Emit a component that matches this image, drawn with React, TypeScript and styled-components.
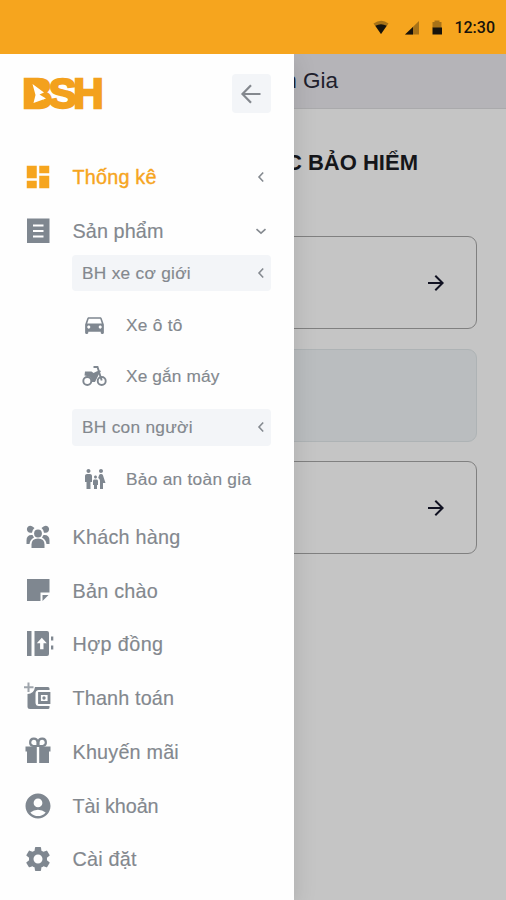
import React from "react";
import styled, { createGlobalStyle } from "styled-components";
import { MdDashboard, MdDirectionsCar, MdFamilyRestroom, MdAccountCircle, MdSettings, MdArrowForward } from "react-icons/md";

const ORANGE = "#f6a51e";
const GREY = "#7f8790";
const TEXT_GREY = "#83888e";

const Global = createGlobalStyle`
  * { box-sizing: border-box; }
  body { margin: 0; font-family: "Liberation Sans", Arial, sans-serif; }
`;

const Screen = styled.div`
  position: relative;
  display: flex;
  flex-direction: column;
  width: 506px;
  height: 900px;
  overflow: hidden;
  background: #c5c5c5;
`;

const StatusBar = styled.header`
  display: flex;
  flex: none;
  align-items: center;
  justify-content: flex-end;
  height: 54px;
  padding-right: 11px;
  background: ${ORANGE};
  color: #17130c;
`;

const StatusIcons = styled.svg`
  width: 72px;
  height: 20px;
  margin: 2px 9px 0 0;
`;

const Clock = styled.span`
  margin-top: 1px;
  font: 500 16px/20px Roboto, sans-serif;
`;

const TitleBar = styled.div`
  display: flex;
  flex: none;
  align-items: center;
  justify-content: flex-end;
  height: 55px;
  padding-right: 168px;
  background: #b5b4b8;
  border-bottom: 1px solid #aaaaac;
  color: #20202c;
  font-size: 22.5px;
  white-space: nowrap;
`;

const Heading = styled.h1`
  margin: 39px 88px 0 0;
  height: 30px;
  color: #15161a;
  font-size: 22px;
  line-height: 30px;
  text-align: right;
  white-space: nowrap;
`;

const Cards = styled.div`
  display: flex;
  flex-direction: column;
  gap: 19.5px;
  padding: 58px 29px 0;
`;

const Card = styled.div<{ $muted?: boolean }>`
  display: flex;
  align-items: center;
  justify-content: flex-end;
  height: 93px;
  padding-right: 28px;
  border: 1px solid ${(p) => (p.$muted ? "#aeb3b5" : "#808080")};
  border-radius: 9px;
  background: ${(p) => (p.$muted ? "#babdbf" : "transparent")};
  color: #111222;
`;

const Drawer = styled.aside`
  position: absolute;
  top: 54px;
  left: 0;
  bottom: 0;
  display: flex;
  flex-direction: column;
  width: 294px;
  background: #fefefe;
  box-shadow: 0 6px 22px rgba(0, 0, 0, 0.13);
  clip-path: inset(0 -40px 0 0);
`;

const DrawerTop = styled.div`
  display: flex;
  align-items: center;
  justify-content: space-between;
  height: 96.5px;
  padding: 0 23px 17.5px 23px;
`;

const BackButton = styled.button`
  display: grid;
  place-items: center;
  width: 39px;
  height: 39px;
  padding: 0 2px 0 0;
  border: 0;
  border-radius: 4px;
  background: #f3f5f8;
`;

const Row = styled.div<{ $active?: boolean }>`
  display: grid;
  flex: none;
  grid-template-columns: 32px 1fr 20px;
  column-gap: 18.5px;
  align-items: center;
  height: 53.75px;
  padding: 0 23px 0 22px;
  color: ${(p) => (p.$active ? ORANGE : GREY)};
`;

const Glyph = styled.svg`
  display: block;
  width: 32px;
  height: 32px;
`;

const Cell = styled.span`
  display: grid;
  place-items: center;
`;

const Label = styled.span<{ $active?: boolean; $spacing?: number }>`
  padding-top: 1px;
  color: ${(p) => (p.$active ? ORANGE : TEXT_GREY)};
  font-size: 19.8px;
  letter-spacing: ${(p) => p.$spacing ?? 0.2}px;
  white-space: nowrap;
  -webkit-text-stroke: ${(p) => (p.$active ? 0.4 : 0.15)}px currentColor;
`;

const SubList = styled.div`
  display: flex;
  flex-direction: column;
  gap: 15px;
  margin: -3px 23px 13px 72px;
`;

const Group = styled.div`
  display: flex;
  align-items: center;
  justify-content: space-between;
  height: 36.4px;
  padding-left: 10px;
  border-radius: 4px;
  background: #f3f5f8;
  color: ${GREY};
`;

const SubItem = styled.div`
  display: grid;
  grid-template-columns: 25px 1fr;
  column-gap: 19px;
  align-items: center;
  height: 36.4px;
  padding-left: 10px;
  color: ${GREY};
`;

const SubLabel = styled.span<{ $spacing?: number }>`
  padding-top: 1px;
  color: ${TEXT_GREY};
  font-size: 17.3px;
  letter-spacing: ${(p) => p.$spacing ?? 0.28}px;
  white-space: nowrap;
  -webkit-text-stroke: 0.15px currentColor;
`;

const Chevron = ({ down }: { down?: boolean }) => (
  <svg width="20" height="20" viewBox="0 0 20 20" fill="none" stroke="#858a90" strokeWidth="1.6">
    <path d={down ? "M5.5 8.2 10 12.2 14.5 8.2" : "M12.2 5.5 8 10 12.2 14.5"} />
  </svg>
);

const Logo = () => (
  <svg width="82" height="36" viewBox="0 0 82 36" overflow="visible">
    <text
      x="-0.8"
      y="32"
      fill="#f3a11d"
      stroke="#f3a11d"
      strokeWidth="2.4"
      fontFamily="Liberation Sans, Arial, sans-serif"
      fontWeight="700"
      fontSize="42"
      letterSpacing="-3.7"
    >
      BSH
    </text>
    <path d="M6 6h14v22H6Z" fill="#f3a11d" />
    <path d="M9.500 8 21 16.500 16.500 18.500 23 22.500 10.500 27 12.500 19Z" fill="#fff" />
  </svg>
);

const MotorbikeIcon = () => (
  <svg width="25" height="22" viewBox="0 0 25 22" fill="none" stroke="currentColor" strokeWidth="1.900">
    <circle cx="5.300" cy="16" r="4" />
    <circle cx="19.700" cy="16" r="4" />
    <path d="M11.500 2h4l4.200 13.500M15.500 7.500l3-1.500" />
    <path fill="currentColor" stroke="none" d="M3 6.500h6.500l2 1.500 4-2 1.800 2.500-4.300 8.500h-3q0-5-5-6L2.500 10.500Z" />
  </svg>
);

const CustomerIcon = () => (
  <Glyph viewBox="0 0 32 32" fill="currentColor">
    <circle cx="16" cy="12.500" r="3.900" />
    <path d="M9.500 27v-3.500q0-6 6.500-6t6.500 6V27Z" />
    <path d="M10 5.200a3.500 3.500 0 1 0-1.500 6.600h1.500a7 7 0 0 1 2.500-4.700ZM22 5.200a3.500 3.500 0 1 1 1.500 6.600h-1.500a7 7 0 0 0-2.500-4.700Z" />
    <path d="M4.500 23v-3.500q0-5.500 5-5.500h1l1.500 2.500q-4 2-4.500 6.500ZM27.500 23v-3.500q0-5.500-5-5.500h-1L20 16.500q4 2 4.500 6.500Z" />
  </Glyph>
);

const icons = {
  products: (
    <Glyph viewBox="0 0 32 32">
      <path fill="currentColor" d="M5 3.500h22.500v24.500H5Z" />
      <path stroke="#fff" strokeWidth="2.200" d="M11 10.500h10.500M11 16h10.500M11 21.500h10.500" />
    </Glyph>
  ),
  note: (
    <Glyph viewBox="0 0 32 32" fill="currentColor">
      <path d="M5 4h22.500v13.500H18.500V26H5Z" />
      <path d="M20.500 20h6l-6 6Z" />
    </Glyph>
  ),
  contract: (
    <Glyph viewBox="0 0 32 32" fill="currentColor">
      <path d="M5 3h4.500v25H5ZM12.500 3H25a2 2 0 0 1 2 2v21a2 2 0 0 1-2 2H12.500ZM29 8.500h2.300v4H29ZM29 17.500h2.300v4H29Z" />
      <path fill="#fff" d="m19.800 9.700 5 5.600h-3.300v6h-3.400v-6h-3.300Z" />
    </Glyph>
  ),
  wallet: (
    <Glyph viewBox="0 0 32 32" fill="none" stroke="currentColor">
      <path strokeWidth="2" opacity=".75" d="M6.500 .5v9.500M2 5.200h9.500" />
      <path fill="currentColor" stroke="none" d="M13 5h13a1.500 1.500 0 0 1 1.500 1.500V8H17q-3.500 0-3.500 3.500v9q0 3.500 3.500 3.500h10.500v1.500A1.500 1.500 0 0 1 26 27H8q-2.500 0-2.500-2.500V12Q12 12 13 5Z" />
      <path strokeWidth="2.800" d="M17.500 11.500H27v9h-9.500Z" />
      <circle cx="22" cy="16" r="1.700" fill="currentColor" stroke="none" />
    </Glyph>
  ),
  gift: (
    <Glyph viewBox="0 0 32 32" fill="currentColor">
      <path d="M3.500 10.500h25v5H27V27H17.200V10.700h-2.400V27H5V15.500H3.500Z" />
      <path fill="none" stroke="currentColor" strokeWidth="2.200" d="M15.500 10h-4.300a3.700 3.700 0 1 1 4.300-4.200ZM16.500 10h4.300a3.700 3.700 0 1 0-4.300-4.200Z" />
    </Glyph>
  ),
};

type Entry = { icon: React.ReactNode; text: string; spacing?: number };
const entries: Entry[] = [
  { icon: <CustomerIcon />, text: "Khách hàng", spacing: 0.25 },
  { icon: icons.note, text: "Bản chào", spacing: 0.25 },
  { icon: icons.contract, text: "Hợp đồng", spacing: 0.4 },
  { icon: icons.wallet, text: "Thanh toán", spacing: 0.15 },
  { icon: icons.gift, text: "Khuyến mãi", spacing: 0.2 },
  { icon: <MdAccountCircle size={30} />, text: "Tài khoản", spacing: -0.1 },
  { icon: <MdSettings size={30} />, text: "Cài đặt" },
];

export default function App() {
  return (
    <Screen>
      <Global />
      <StatusBar>
        <StatusIcons viewBox="0 0 72 20" fill="currentColor">
          <path opacity=".35" d="M0.500 5.500q8-5.500 15 0L8 16Z" />
          <path d="M2.300 7.700q5.700-3 11.400 0L8 16Z" />
          <path opacity=".35" d="M46 3v13.500H32Z" />
          <path d="M40 9v7.500h-8Z" />
          <path opacity=".35" d="M59.500 4h2V2.500h5V4h2v6h-9Z" />
          <path d="M59.500 9.500h9.500v7h-9.500Z" />
        </StatusIcons>
        <Clock>12:30</Clock>
      </StatusBar>
      <TitleBar>Bảo An toàn Gia</TitleBar>
      <Heading>DANH MỤC BẢO HIỂM</Heading>
      <Cards>
        <Card><MdArrowForward size={24} /></Card>
        <Card $muted />
        <Card><MdArrowForward size={24} /></Card>
      </Cards>
      <Drawer>
        <DrawerTop>
          <Logo />
          <BackButton aria-label="Back">
            <svg width="24" height="24" viewBox="0 0 24 24" fill="none" stroke="#84888e" strokeWidth="2.200">
              <path d="M21.500 12H3.500M12 3.200 3.500 12 12 20.800" />
            </svg>
          </BackButton>
        </DrawerTop>
        <Row $active>
          <Cell><MdDashboard size={30} /></Cell>
          <Label $active $spacing={0.2}>Thống kê</Label>
          <Chevron />
        </Row>
        <Row>
          <Cell>{icons.products}</Cell>
          <Label $spacing={0.1}>Sản phẩm</Label>
          <Chevron down />
        </Row>
        <SubList>
          <Group><SubLabel>BH xe cơ giới</SubLabel><Chevron /></Group>
          <SubItem><Cell><MdDirectionsCar size={25} /></Cell><SubLabel>Xe ô tô</SubLabel></SubItem>
          <SubItem><Cell><MotorbikeIcon /></Cell><SubLabel $spacing={0.12}>Xe gắn máy</SubLabel></SubItem>
          <Group><SubLabel>BH con người</SubLabel><Chevron /></Group>
          <SubItem><Cell><MdFamilyRestroom size={24} /></Cell><SubLabel>Bảo an toàn gia</SubLabel></SubItem>
        </SubList>
        {entries.map((e) => (
          <Row key={e.text}>
            <Cell>{e.icon}</Cell>
            <Label $spacing={e.spacing}>{e.text}</Label>
          </Row>
        ))}
      </Drawer>
    </Screen>
  );
}
